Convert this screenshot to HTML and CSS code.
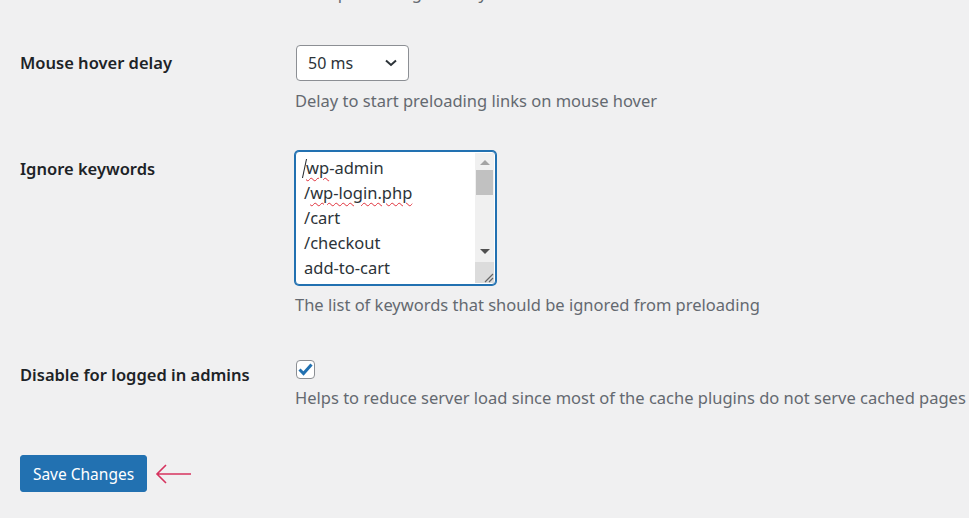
FILE: index.html
```html
<!DOCTYPE html>
<html lang="en">
<head>
  <meta charset="UTF-8" />
  <title>Flying Pages Settings</title>
  <link rel="stylesheet" href="styles.css">
</head>
<body>
  <p class="desc top-desc">Limit preloading in every second</p>

  <div class="row row-hover">
    <div class="row-label">Mouse hover delay</div>
    <div class="field">
      <div class="select">
        <span>50 ms</span>
        <svg class="chevron" width="12" height="8" viewBox="0 0 12 8">
          <path d="M1 1.5 L6 6 L11 1.5" fill="none" stroke="#2c3338" stroke-width="2" />
        </svg>
      </div>
      <p class="desc">Delay to start preloading links on mouse hover</p>
    </div>
  </div>

  <div class="row row-keywords">
    <div class="row-label">Ignore keywords</div>
    <div class="field">
      <div class="textarea">
        <div class="textarea-lines">
          <div><span class="caret"></span><span class="typo">wp</span>-admin</div>
          <div>/<span class="typo">wp-login.php</span></div>
          <div>/cart</div>
          <div>/checkout</div>
          <div>add-to-cart</div>
        </div>
        <div class="scrollbar">
          <span class="arrow-up"></span>
          <span class="thumb"></span>
          <span class="track"></span>
          <span class="arrow-down"></span>
          <span class="resizer">
            <svg width="12" height="12" viewBox="0 0 12 12">
              <path d="M11 3 L3 11 M11 7 L7 11" stroke="#666" stroke-width="1.2" />
            </svg>
          </span>
        </div>
      </div>
      <p class="desc">The list of keywords that should be ignored from preloading</p>
    </div>
  </div>

  <div class="row row-admins">
    <div class="row-label">Disable for logged in admins</div>
    <div class="field field-check">
      <span class="checkbox">
        <svg width="15" height="13" viewBox="0 0 15 13">
          <path d="M1.5 6.5 L5.5 10.5 L13.5 1.5" fill="none" stroke="#2271b1" stroke-width="3" />
        </svg>
      </span>
      <p class="desc">Helps to reduce server load since most of the cache plugins do not serve cached pages</p>
    </div>
  </div>

  <div class="submit">
    <button class="button-primary">Save Changes</button>
    <svg class="pointer" width="38" height="22" viewBox="0 0 38 22">
      <path d="M2 11 H36 M11 2 L2 11 L11 20" fill="none" stroke="#d6335f" stroke-width="1.6" />
    </svg>
  </div>
</body>
</html>
```

FILE: styles.css
```css
/* General */
body {
  margin: 0;
  padding: 0 20px;
  background: #f0f0f1;
  font-family: "Noto Sans", "Open Sans", sans-serif;
  font-size: 16.5px;
  color: #1d2327;
  overflow: hidden;
}

p {
  margin: 0;
}

.desc {
  color: #646970;
  line-height: 24px;
  margin-top: 8px;
  white-space: nowrap;
}

.top-desc {
  margin: -19px 0 0 275px;
}

/* Rows */
.row {
  display: grid;
  grid-template-columns: 275px 1fr;
}

.row-label {
  font-weight: 600;
  font-size: 16.5px;
  line-height: 24px;
  padding-top: 6px;
}

.row-hover {
  margin-top: 40px;
}

.row-keywords {
  margin-top: 38px;
}

.row-admins {
  margin-top: 40px;
}

/* Select */
.select {
  box-sizing: border-box;
  width: 113px;
  height: 36px;
  margin-left: 1px;
  padding: 0 10px 0 11px;
  border: 1px solid #8c8f94;
  border-radius: 4px;
  background: #fff;
  color: #2c3338;
  font-size: 16px;
  display: flex;
  align-items: center;
  justify-content: space-between;
}

.chevron {
  margin-right: 1px;
}

/* Textarea */
.textarea {
  box-sizing: border-box;
  width: 201px;
  height: 134px;
  border: 1px solid #2271b1;
  box-shadow: 0 0 0 1px #2271b1;
  border-radius: 4px;
  background: #fff;
  display: flex;
  overflow: hidden;
}

.textarea-lines {
  flex: 1;
  padding: 3px 0 0 8px;
  font-size: 16.5px;
  line-height: 25px;
  color: #2c3338;
  white-space: nowrap;
}

.caret {
  display: inline-block;
  width: 1px;
  height: 19px;
  margin-right: 1px;
  background: #1d2327;
  vertical-align: -4px;
  transform: skewX(-12deg);
}

.typo {
  text-decoration: underline wavy #e0323c;
  text-decoration-thickness: 1px;
  text-underline-offset: 3px;
}

.scrollbar {
  width: 19px;
  margin: 1px 1px 1px 0;
  background: #f0f0f0;
  display: flex;
  flex-direction: column;
  align-items: center;
}

.arrow-up {
  margin-top: 7px;
  width: 0;
  height: 0;
  border-left: 5px solid transparent;
  border-right: 5px solid transparent;
  border-bottom: 5px solid #a3a3a3;
}

.thumb {
  width: 17px;
  height: 25px;
  margin-top: 5px;
  background: #c1c1c1;
}

.track {
  flex: 1;
}

.arrow-down {
  margin-bottom: 8px;
  width: 0;
  height: 0;
  border-left: 5px solid transparent;
  border-right: 5px solid transparent;
  border-top: 5px solid #505050;
}

.resizer {
  width: 19px;
  height: 21px;
  background: #dcdcdc;
  display: flex;
  align-items: flex-end;
  justify-content: flex-end;
}

/* Checkbox */
.field-check {
  padding-top: 3px;
}

.checkbox {
  box-sizing: border-box;
  width: 19px;
  height: 19px;
  margin-left: 1px;
  border: 1px solid #8c8f94;
  border-radius: 4px;
  background: #fff;
  display: flex;
  align-items: center;
  justify-content: center;
}

.field-check .desc {
  margin-top: 7px;
}

/* Submit */
.submit {
  margin-top: 45px;
  display: flex;
  align-items: center;
  gap: 8px;
}

.button-primary {
  height: 37px;
  width: 127px;
  padding: 0;
  background: #2271b1;
  border: 1px solid #2271b1;
  border-radius: 3px;
  color: #fff;
  font-family: inherit;
  font-size: 15.5px;
}

.pointer {
  margin-top: 1px;
}
```
